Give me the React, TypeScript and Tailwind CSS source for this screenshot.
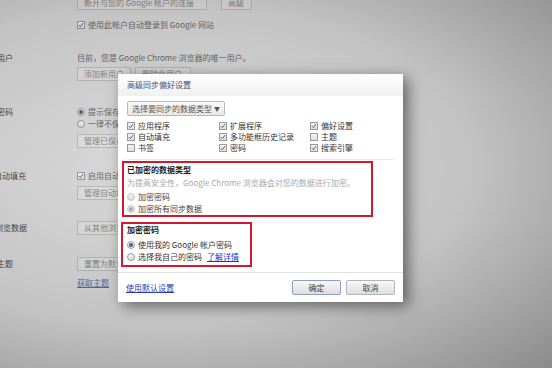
import React from "react"

const font = { fontFamily: '"Noto Sans CJK SC", "Liberation Sans", sans-serif' }

function Check({ on = true }: { on?: boolean }) {
  return (
    <span className="inline-flex h-[8px] w-[8px] shrink-0 items-center justify-center border border-[#9a9a9a] bg-gradient-to-b from-[#f4f4f4] to-[#dedede]">
      {on && (
        <svg viewBox="0 0 8 8" className="h-[6px] w-[6px]">
          <path d="M1.2 4.2 L3.2 6.2 L6.8 1.4" fill="none" stroke="#4b5a8c" strokeWidth="1.3" />
        </svg>
      )}
    </span>
  )
}

function Radio({ on = false, faded = false }: { on?: boolean; faded?: boolean }) {
  return (
    <span
      className={`inline-flex h-[8px] w-[8px] shrink-0 items-center justify-center rounded-full border ${
        faded ? "border-[#c4c4c4]" : "border-[#9a9a9a]"
      } bg-gradient-to-b from-[#f6f6f6] to-[#dcdcdc]`}
    >
      {on && <span className={`h-[4px] w-[4px] rounded-full ${faded ? "bg-[#a8a8a8]" : "bg-[#4b5a8c]"}`} />}
    </span>
  )
}

function BgButton({ children, w }: { children: React.ReactNode; w: string }) {
  return (
    <div className={`${w} flex h-[14px] shrink-0 items-center overflow-hidden whitespace-nowrap border border-[#bdbdbd] bg-[#e0e0e0] px-[6px] text-[8px] leading-none text-[#8a8a8a]`}>
      {children}
    </div>
  )
}

export default function App() {
  const items: [string, boolean][] = [
    ["应用程序", true],
    ["扩展程序", true],
    ["偏好设置", true],
    ["自动填充", true],
    ["多功能框历史记录", true],
    ["主题", false],
    ["书签", false],
    ["密码", true],
    ["搜索引擎", true],
  ]

  return (
    <div className="relative h-[368px] w-[552px] overflow-hidden bg-[#dadada] text-[#6a6a6a]" style={font}>
      {/* settings page behind the dialog */}
      <div className="flex flex-col whitespace-nowrap text-[8px] leading-none">
        <div className="ml-[77px] mt-[-4px] flex gap-[14px]">
          <BgButton w="w-[130px]">断开与您的 Google 帐户的连接</BgButton>
          <BgButton w="w-[31px]">高级</BgButton>
        </div>
        <div className="ml-[77px] mt-[11px] flex items-center gap-[3px]">
          <Check />
          <span>使用此帐户自动登录到 Google 网站</span>
        </div>

        <div className="mt-[25px] flex">
          <div className="-ml-[3px] w-[80px] text-[#4a4a4a]">用户</div>
          <div className="flex flex-col gap-[5px]">
            <span>目前，您是 Google Chrome 浏览器的唯一用户。</span>
            <div className="flex gap-[4px]">
              <BgButton w="w-[54px]">添加新用户</BgButton>
              <BgButton w="w-[56px]">删除此用户</BgButton>
            </div>
          </div>
        </div>

        <div className="mt-[27px] flex">
          <div className="-ml-[3px] w-[80px] text-[#4a4a4a]">密码</div>
          <div className="flex flex-col">
            <div className="flex items-center gap-[3px]"><Radio on />提示保存密码</div>
            <div className="mt-[4px] flex items-center gap-[3px]"><Radio />一律不保存</div>
            <div className="mt-[6px]"><BgButton w="w-[60px]">管理已保存</BgButton></div>
          </div>
        </div>

        <div className="mt-[24px] flex">
          <div className="-ml-[6px] w-[83px] text-[#4a4a4a]">自动填充</div>
          <div className="flex flex-col">
            <div className="flex items-center gap-[3px]"><Check />启用自动填充</div>
            <div className="mt-[6px]"><BgButton w="w-[60px]">管理自动填充</BgButton></div>
          </div>
        </div>

        <div className="mt-[21px] flex items-center">
          <div className="-ml-[5px] w-[82px] text-[#4a4a4a]">浏览数据</div>
          <BgButton w="w-[60px]">从其他浏览器</BgButton>
        </div>

        <div className="mt-[22px] flex items-center">
          <div className="-ml-[3px] w-[80px] text-[#4a4a4a]">主题</div>
          <BgButton w="w-[60px]">重置为默认</BgButton>
        </div>
        <div className="ml-[77px] mt-[8px] text-[#5a6aa6] underline">获取主题</div>
      </div>

      {/* dim overlay */}
      <div className="absolute inset-0 bg-[radial-gradient(ellipse_at_30%_45%,rgba(0,0,0,0)_0%,rgba(0,0,0,0.1)_55%,rgba(0,0,0,0.36)_100%)]" />

      {/* dialog */}
      <div className="absolute left-[118px] top-[74px] flex h-[228px] w-[285px] flex-col bg-white shadow-[5px_4px_14px_rgba(0,0,0,0.5)]">
        <div className="flex h-[22px] shrink-0 items-center bg-gradient-to-b from-[#ffffff] to-[#f0f0f0] px-[9px] text-[8px] leading-none text-[#3f4f80]">
          高级同步偏好设置
        </div>
        <div className="flex flex-col whitespace-nowrap px-[9px] text-[8px] leading-none text-[#333]">
          <div className="mt-[5px] flex h-[15px] w-[98px] items-center justify-between rounded-[2px] border border-[#b8b8b8] bg-gradient-to-b from-[#fafafa] to-[#e8e8e8] px-[4px] text-[#555]">
            <span>选择要同步的数据类型</span>
            <span className="text-[6px]">▼</span>
          </div>
          <div className="mt-[6px] grid grid-cols-[92px_91px_1fr] gap-y-[3px]">
            {items.map(([label, on]) => (
              <div key={label} className="flex h-[8px] items-center gap-[3px]">
                <Check on={on} />
                <span>{label}</span>
              </div>
            ))}
          </div>
          <div className="mt-[7px] h-px w-full bg-[#e6e6e6]" />

          <div className="ml-[-5px] mt-[1px] flex h-[56px] w-[251px] flex-col border-2 border-[#d2172f] px-[3px] pt-[3px]">
            <span className="font-bold text-[#222]">已加密的数据类型</span>
            <span className="mt-[5px] text-[#aaa]">为提高安全性，Google Chrome 浏览器会对您的数据进行加密。</span>
            <div className="mt-[6px] flex items-center gap-[3px] text-[#444]"><Radio faded />加密密码</div>
            <div className="mt-[4px] flex items-center gap-[3px] text-[#444]"><Radio on faded />加密所有同步数据</div>
          </div>

          <div className="ml-[-6px] mt-[5px] flex h-[45px] w-[131px] flex-col border-2 border-[#d2172f] px-[4px] pt-[2px]">
            <span className="font-bold text-[#222]">加密密码</span>
            <div className="mt-[7px] flex items-center gap-[3px]"><Radio on />使用我的 Google 帐户密码</div>
            <div className="mt-[4px] flex items-center gap-[3px]">
              <Radio />选择我自己的密码<span className="ml-[2px] text-[#1a38c8] underline">了解详情</span>
            </div>
          </div>
        </div>

        <div className="mt-auto flex h-[30px] shrink-0 items-center justify-between border-t border-[#e2e2e2] px-[8px] text-[8px] leading-none">
          <span className="text-[#2a3bb0] underline">使用默认设置</span>
          <div className="flex gap-[5px]">
            <div className="flex h-[15px] w-[49px] items-center justify-center rounded-[2px] border border-[#8da0c0] bg-gradient-to-b from-[#f8f8f8] to-[#dedede] text-[#444]">确定</div>
            <div className="flex h-[15px] w-[49px] items-center justify-center rounded-[2px] border border-[#b4b4b4] bg-gradient-to-b from-[#f8f8f8] to-[#dedede] text-[#444]">取消</div>
          </div>
        </div>
      </div>
    </div>
  )
}
